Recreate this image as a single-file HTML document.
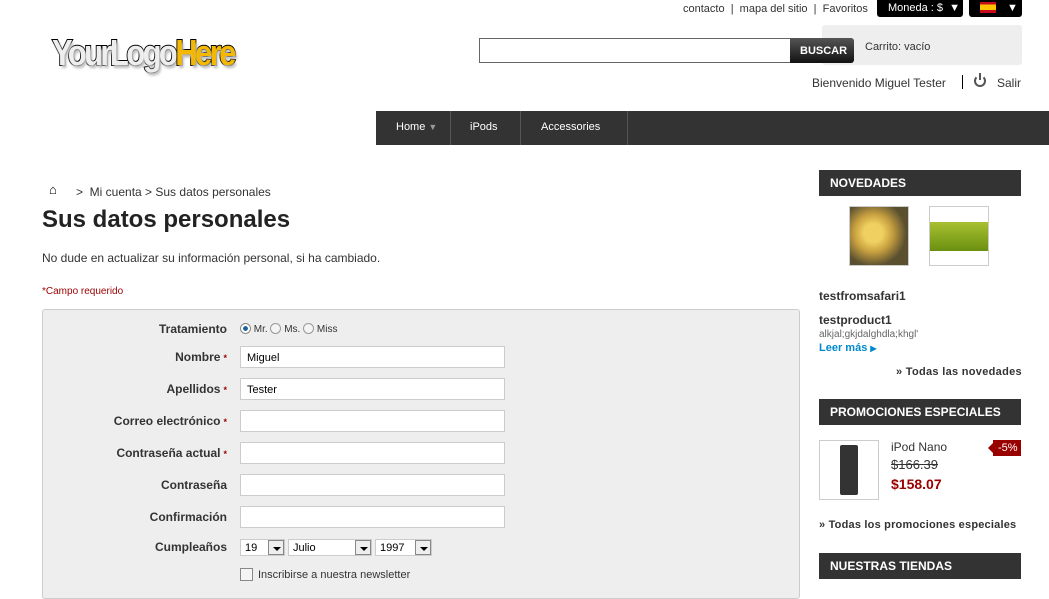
<!DOCTYPE html>
<html><head><meta charset="utf-8"><style>
*{margin:0;padding:0;box-sizing:border-box}
body{width:1049px;height:590px;overflow:hidden;background:#fff;font-family:"Liberation Sans",Arial,sans-serif;color:#333;position:relative}
.a{position:absolute;white-space:nowrap}
.lbl{position:absolute;right:822px;font-size:12px;font-weight:bold;color:#333;text-align:right}
.lbl b{color:#990000;font-size:9px;margin-left:3px}
.inp{position:absolute;left:240px;width:265px;height:22px;background:#fff;border:1px solid #ccc;font-size:11px;padding:5px 6px;color:#000}
.hd{position:absolute;left:819px;width:202px;height:26px;background:#333;color:#fff;font-size:12px;font-weight:bold;padding:6px 11px}
.sel{position:absolute;top:539px;height:17px;background:#fff;border:1px solid #ccc;font-size:11px;padding:2px 4px;color:#000}
.sel i{position:absolute;right:0;top:0;width:16px;height:15px;border:1px solid #888;background:#eee}
.sel i:after{content:"";position:absolute;left:4px;top:6px;border:4px solid transparent;border-top:4px solid #000}
</style></head><body>
<div class="a" style="left:683px;top:3px;font-size:11px;color:#333">contacto &nbsp;|&nbsp; mapa del sitio &nbsp;|&nbsp; Favoritos</div>
<div class="a" style="left:877px;top:0;width:86px;height:17px;background:#000;border-radius:0 0 3px 3px;color:#fff;font-size:11px;padding:2px 0 0 11px">Moneda : $ &nbsp;▼</div>
<div class="a" style="left:969px;top:0;width:53px;height:17px;background:#000;border-radius:0 0 3px 3px;color:#fff;font-size:11px;padding:2px 0 0 0"><span style="position:absolute;left:11px;top:2px;width:16px;height:11px;background:linear-gradient(#c60b1e 25%,#ffc400 25%,#ffc400 75%,#c60b1e 75%)"></span><span style="position:absolute;left:38px;top:2px">▼</span></div>
<div class="a" style="left:52px;top:32px;font-size:36px;font-weight:bold;letter-spacing:-3px;color:#eee;-webkit-text-stroke:2px #000;paint-order:stroke fill;text-shadow:2px 3px 3px #bbb;transform:scaleX(0.86);transform-origin:0 0">YourLogo<span style="color:#f5b800">Here</span></div>
<div class="a" style="left:479px;top:38px;width:312px;height:25px;border:1px solid #666;background:#fff"></div>
<div class="a" style="left:790px;top:38px;width:64px;height:25px;background:linear-gradient(#555,#111);border-radius:0 3px 3px 0;color:#fff;font-size:11px;font-weight:bold;padding:7px 10px">BUSCAR</div>
<div class="a" style="left:822px;top:25px;width:200px;height:40px;background:#eee;border-radius:3px;z-index:-1"></div>
<div class="a" style="left:865px;top:41px;font-size:11px;color:#333">Carrito: vacío</div>
<div class="a" style="left:812px;top:76px;font-size:12px;color:#333">Bienvenido Miguel Tester</div>
<div class="a" style="left:962px;top:75px;width:1px;height:14px;background:#000"></div>
<div class="a" style="left:974px;top:75px;width:12px;height:12px;border:2px solid #555;border-top-color:transparent;border-radius:50%"></div>
<div class="a" style="left:979px;top:73px;width:2px;height:7px;background:#555"></div>
<div class="a" style="left:997px;top:76px;font-size:12px;color:#333">Salir</div>
<div class="a" style="left:376px;top:111px;width:673px;height:34px;background:#333;color:#fff;font-size:11px">
<span class="a" style="left:20px;top:10px">Home <span style="color:#999;font-size:9px">▼</span></span>
<span class="a" style="left:74px;top:0;width:1px;height:34px;background:#555"></span>
<span class="a" style="left:94px;top:10px">iPods</span>
<span class="a" style="left:144px;top:0;width:1px;height:34px;background:#555"></span>
<span class="a" style="left:165px;top:10px">Accessories</span>
<span class="a" style="left:251px;top:0;width:1px;height:34px;background:#555"></span>
</div>
<div class="a" style="left:49px;top:182px;font-size:13px;color:#000;font-weight:bold">⌂</div>
<div class="a" style="left:76px;top:185px;font-size:12px;color:#333">&gt; &nbsp;Mi cuenta &gt; Sus datos personales</div>
<div class="a" style="left:42px;top:206px;font-size:24px;font-weight:bold;color:#222">Sus datos personales</div>
<div class="a" style="left:42px;top:251px;font-size:12px;color:#333">No dude en actualizar su información personal, si ha cambiado.</div>
<div class="a" style="left:42px;top:286px;font-size:10px;color:#990000">*Campo requerido</div>
<div class="a" style="left:42px;top:309px;width:758px;height:290px;background:#eee;border:1px solid #ccc;border-radius:3px"></div>
<div class="lbl" style="top:322px">Tratamiento</div>
<div class="a" style="left:240px;top:323px;font-size:10px;color:#333"><span style="display:inline-block;width:11px;height:11px;border-radius:50%;border:1px solid #888;background:radial-gradient(#1a5fa0 35%,#fff 40%);vertical-align:-2px"></span> Mr. <span style="display:inline-block;width:11px;height:11px;border-radius:50%;border:1px solid #999;background:#f4f4f4;vertical-align:-2px"></span> Ms. <span style="display:inline-block;width:11px;height:11px;border-radius:50%;border:1px solid #999;background:#f4f4f4;vertical-align:-2px"></span> Miss</div>
<div class="lbl" style="top:350px">Nombre<b>*</b></div><div class="inp" style="top:346px">Miguel</div>
<div class="lbl" style="top:382px">Apellidos<b>*</b></div><div class="inp" style="top:378px">Tester</div>
<div class="lbl" style="top:414px">Correo electrónico<b>*</b></div><div class="inp" style="top:410px"></div>
<div class="lbl" style="top:446px">Contraseña actual<b>*</b></div><div class="inp" style="top:442px"></div>
<div class="lbl" style="top:478px">Contraseña</div><div class="inp" style="top:474px"></div>
<div class="lbl" style="top:510px">Confirmación</div><div class="inp" style="top:506px"></div>
<div class="lbl" style="top:540px">Cumpleaños</div>
<div class="sel" style="left:240px;width:45px">19<i></i></div>
<div class="sel" style="left:288px;width:84px">Julio<i></i></div>
<div class="sel" style="left:375px;width:57px">1997<i></i></div>
<div class="a" style="left:240px;top:568px;width:13px;height:13px;border:1px solid #888;background:#f4f4f4"></div>
<div class="a" style="left:258px;top:569px;font-size:11px;color:#333">Inscribirse a nuestra newsletter</div>
<div class="hd" style="top:170px">NOVEDADES</div>
<div class="a" style="left:849px;top:206px;width:60px;height:60px;border:1px solid #ccc;background:radial-gradient(circle at 40% 45%,#f0d060 20%,#c8a040 40%,#5a5030 70%)"></div>
<div class="a" style="left:929px;top:206px;width:60px;height:60px;border:1px solid #ccc;background:#fff"><div style="margin-top:15px;height:29px;background:linear-gradient(#a8c030,#6a9010)"></div></div>
<div class="a" style="left:819px;top:289px;font-size:12px;font-weight:bold;color:#333">testfromsafari1</div>
<div class="a" style="left:819px;top:313px;font-size:12px;font-weight:bold;color:#333">testproduct1</div>
<div class="a" style="left:819px;top:329px;font-size:10px;color:#666">alkjal;gkjdalghdla;khgl'</div>
<div class="a" style="left:819px;top:342px;font-size:11px;font-weight:bold;color:#0088cc">Leer más <span style="font-size:8px">▶</span></div>
<div class="a" style="left:896px;top:366px;font-size:11px;font-weight:bold;color:#333;letter-spacing:0.3px">» Todas las novedades</div>
<div class="hd" style="top:399px">PROMOCIONES ESPECIALES</div>
<div class="a" style="left:819px;top:440px;width:60px;height:60px;border:1px solid #ccc;background:#fff"><div style="margin:4px auto;width:18px;height:50px;background:#333;border-radius:2px"></div></div>
<div class="a" style="left:891px;top:440px;font-size:12px;color:#333">iPod Nano</div>
<div class="a" style="left:891px;top:457px;font-size:13px;color:#333;text-decoration:line-through">$166.39</div>
<div class="a" style="left:891px;top:476px;font-size:14px;font-weight:bold;color:#990000">$158.07</div>
<div class="a" style="left:993px;top:440px;width:28px;height:16px;background:#990000;color:#fff;font-size:11px;padding:2px 0 0 5px">-5%</div>
<div class="a" style="left:988px;top:443px;border:5px solid transparent;border-right:5px solid #990000;border-left:0"></div>
<div class="a" style="left:819px;top:519px;font-size:11px;font-weight:bold;color:#333;letter-spacing:0.2px">» Todas los promociones especiales</div>
<div class="hd" style="top:553px">NUESTRAS TIENDAS</div>
</body></html>
